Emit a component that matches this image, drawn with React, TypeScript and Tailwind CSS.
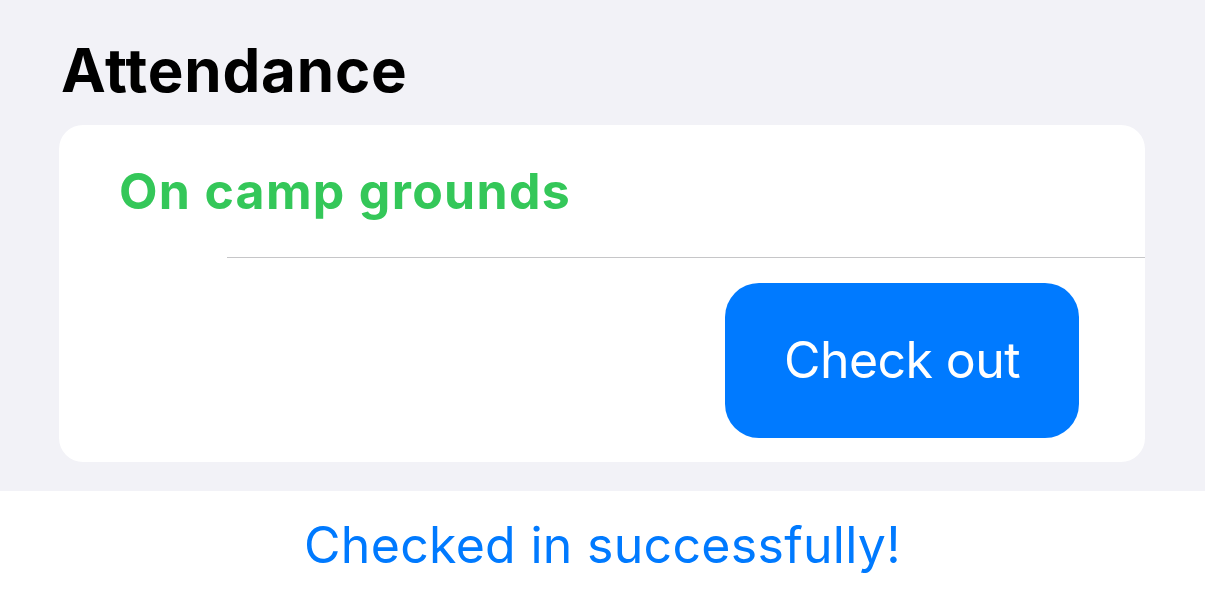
import React from 'react';

const App: React.FC = () => {
  return (
    <div className="w-[1205px] h-[592px] flex flex-col bg-white font-['Inter','Liberation_Sans',sans-serif] antialiased">
      {/* Grouped section */}
      <section className="h-[491px] bg-[#f2f2f7] px-[59px] pt-[40px]">
        <h1 className="ml-[2px] mb-[25px] text-[60px] leading-none font-bold tracking-[0.8px] text-black">
          Attendance
        </h1>

        <div className="w-[1086px] rounded-[24px] bg-white overflow-hidden">
          <div className="h-[132px] flex items-center pl-[60px]">
            <span className="text-[50px] leading-none font-bold tracking-[1.3px] text-[#34c759]">On camp grounds</span>
          </div>
          <div className="ml-[168px] h-px bg-[#c6c6c8]"></div>
          <div className="h-[204px] flex items-center justify-end pr-[66px]">
            <button className="w-[354px] h-[155px] rounded-[34px] bg-[#007aff] text-white text-[50px] leading-none font-normal tracking-[-0.6px]">
              Check out
            </button>
          </div>
        </div>
      </section>

      {/* Status footer */}
      <footer className="flex-1 flex items-center justify-center pt-[6px]">
        <p className="text-[50px] leading-none tracking-[0.3px] text-[#007aff]">Checked in successfully!</p>
      </footer>
    </div>
  );
};

export default App;
